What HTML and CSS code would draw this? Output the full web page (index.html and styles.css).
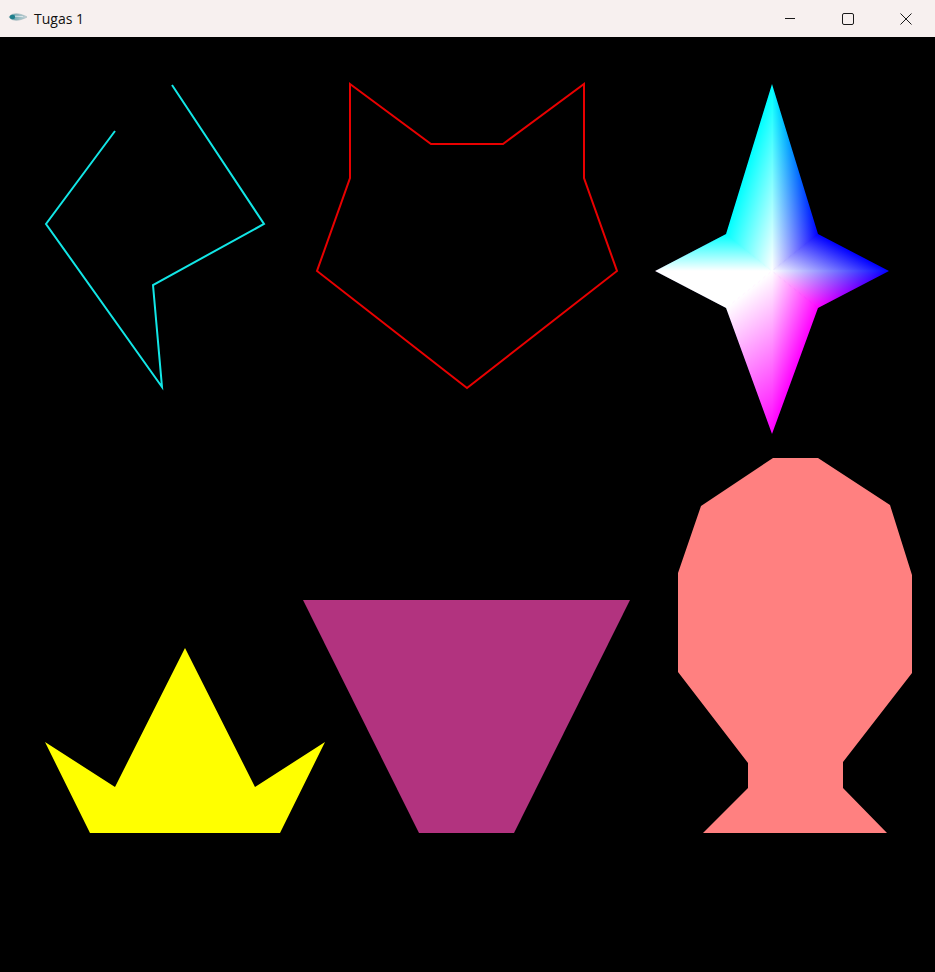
FILE: index.html
```html
<!DOCTYPE html>
<html lang="id">
<head>
<meta charset="utf-8">
<title>Tugas 1</title>
<link rel="stylesheet" href="styles.css">
</head>
<body>
<div class="window">
  <header class="titlebar">
    <svg class="app-icon" width="20" height="10" viewBox="0 0 20 10">
      <defs>
        <linearGradient id="fishBody" x1="0" y1="0" x2="1" y2="0">
          <stop offset="0" stop-color="#2a8c98"/>
          <stop offset="0.35" stop-color="#7fb0b8"/>
          <stop offset="1" stop-color="#c9d6da"/>
        </linearGradient>
      </defs>
      <path d="M1 5 C3 1.5 9 1 13 2.5 C15.5 3.3 18 4.2 19 5 C18 5.8 15.5 6.7 13 7.5 C9 9 3 8.5 1 5 Z" fill="url(#fishBody)" stroke="#9fb3b9" stroke-width="0.6"/>
      <ellipse cx="4.5" cy="5" rx="2.6" ry="2.2" fill="#1f7f8c"/>
      <path d="M7 4.2 L15 4.6" stroke="#e8eef0" stroke-width="0.8"/>
    </svg>
    <span class="title">Tugas 1</span>
    <div class="controls">
      <div class="ctl"><span class="min-line"></span></div>
      <div class="ctl"><span class="max-box"></span></div>
      <div class="ctl">
        <svg width="12" height="12" viewBox="0 0 12 12"><path d="M0.5 0.5 L11.5 11.5 M11.5 0.5 L0.5 11.5" stroke="#1a1a1a" stroke-width="1" fill="none"/></svg>
      </div>
    </div>
  </header>
  <main class="canvas">
    <svg class="scene" width="935" height="935" viewBox="0 37 935 935">
      <defs>
        <clipPath id="starClip">
          <polygon points="772,84 818,234 889,271 818,308 772,434 726,308 655,271 726,234"/>
        </clipPath>
        <!-- red channel -->
        <linearGradient id="gR1" gradientUnits="userSpaceOnUse" x1="824.4" y1="254.9" x2="772" y2="271">
          <stop offset="0" stop-color="#000"/><stop offset="1" stop-color="#f00"/>
        </linearGradient>
        <linearGradient id="gR2" gradientUnits="userSpaceOnUse" x1="797" y1="223.05" x2="772" y2="271">
          <stop offset="0" stop-color="#000"/><stop offset="1" stop-color="#f00"/>
        </linearGradient>
        <linearGradient id="gR3" gradientUnits="userSpaceOnUse" x1="843.04" y1="328.14" x2="889" y2="271">
          <stop offset="0" stop-color="#f00"/><stop offset="1" stop-color="#000"/>
        </linearGradient>
        <linearGradient id="gR7" gradientUnits="userSpaceOnUse" x1="726" y1="271" x2="726" y2="234">
          <stop offset="0" stop-color="#f00"/><stop offset="1" stop-color="#000"/>
        </linearGradient>
        <linearGradient id="gR8" gradientUnits="userSpaceOnUse" x1="719.6" y1="254.9" x2="772" y2="271">
          <stop offset="0" stop-color="#000"/><stop offset="1" stop-color="#f00"/>
        </linearGradient>
        <!-- green channel -->
        <linearGradient id="gG1" gradientUnits="userSpaceOnUse" x1="772" y1="234" x2="818" y2="234">
          <stop offset="0" stop-color="#0f0"/><stop offset="1" stop-color="#000"/>
        </linearGradient>
        <linearGradient id="gG2" gradientUnits="userSpaceOnUse" x1="797" y1="223.05" x2="772" y2="271">
          <stop offset="0" stop-color="#000"/><stop offset="1" stop-color="#0f0"/>
        </linearGradient>
        <linearGradient id="gG3" gradientUnits="userSpaceOnUse" x1="796.99" y1="318.95" x2="772" y2="271">
          <stop offset="0" stop-color="#000"/><stop offset="1" stop-color="#0f0"/>
        </linearGradient>
        <linearGradient id="gG4" gradientUnits="userSpaceOnUse" x1="824.5" y1="290.2" x2="772" y2="271">
          <stop offset="0" stop-color="#000"/><stop offset="1" stop-color="#0f0"/>
        </linearGradient>
        <linearGradient id="gG5" gradientUnits="userSpaceOnUse" x1="692.4" y1="335" x2="772" y2="434">
          <stop offset="0" stop-color="#0f0"/><stop offset="1" stop-color="#000"/>
        </linearGradient>
      </defs>

      <!-- cyan open polyline -->
      <polyline class="cyan-line" points="115,131 46,224 162,387 153,285 264,224 172,85"/>

      <!-- red cat head outline -->
      <polygon class="red-line" points="350,84 431,144 503,144 584,84 584,178 617,271 467,388 317,271 350,178"/>

      <!-- shaded star -->
      <g class="star">
        <polygon fill="#0000ff" points="772,84 818,234 889,271 818,308 772,434 726,308 655,271 726,234"/>
        <g class="screen" clip-path="url(#starClip)">
          <polygon class="tri" fill="url(#gR1)" stroke="url(#gR1)" points="772,271 772,84 818,234"/>
          <polygon class="tri" fill="url(#gR2)" stroke="url(#gR2)" points="772,271 818,234 889,271"/>
          <polygon class="tri" fill="url(#gR3)" stroke="url(#gR3)" points="772,271 889,271 818,308"/>
          <polygon class="tri" fill="#f00" stroke="#f00" points="772,271 818,308 772,434 726,308 655,271"/>
          <polygon class="tri" fill="url(#gR7)" stroke="url(#gR7)" points="772,271 655,271 726,234"/>
          <polygon class="tri" fill="url(#gR8)" stroke="url(#gR8)" points="772,271 726,234 772,84"/>
        </g>
        <g class="screen" clip-path="url(#starClip)">
          <polygon class="tri" fill="url(#gG1)" stroke="url(#gG1)" points="772,271 772,84 818,234"/>
          <polygon class="tri" fill="url(#gG2)" stroke="url(#gG2)" points="772,271 818,234 889,271"/>
          <polygon class="tri" fill="url(#gG3)" stroke="url(#gG3)" points="772,271 889,271 818,308"/>
          <polygon class="tri" fill="url(#gG4)" stroke="url(#gG4)" points="772,271 818,308 772,434"/>
          <polygon class="tri" fill="url(#gG5)" stroke="url(#gG5)" points="772,271 772,434 726,308"/>
          <polygon class="tri" fill="#0f0" stroke="#0f0" points="772,271 726,308 655,271 726,234 772,84"/>
        </g>
      </g>

      <!-- yellow crown -->
      <polygon class="crown" points="185,648 255,787 325,742 280,833 90,833 45,742 115,787"/>

      <!-- purple trapezoid -->
      <polygon class="trapezoid" points="303,600 630,600 514,833 419,833"/>

      <!-- salmon vase -->
      <polygon class="vase" points="773,458 818,458 890,505 912,575 912,673 843,762 843,788 887,833 703,833 748,788 748,763 678,672 678,573 701,506"/>
    </svg>
  </main>
</div>
</body>
</html>
```

FILE: styles.css
```css
html, body {
  margin: 0;
  padding: 0;
  background: #000;
}

.window {
  width: 935px;
  height: 972px;
  display: flex;
  flex-direction: column;
  overflow: hidden;
}

.titlebar {
  height: 37px;
  flex: 0 0 37px;
  display: flex;
  align-items: center;
  background: #f7f0ef;
  font-family: "Segoe UI", "Open Sans", "Noto Sans", sans-serif;
  color: #111;
}

.app-icon {
  margin-left: 8px;
  margin-top: -3px;
  display: block;
}

.title {
  margin-left: 6px;
  font-size: 14px;
  line-height: 37px;
  margin-top: -1px;
}

.controls {
  margin-left: auto;
  display: flex;
  height: 37px;
}

.ctl {
  width: 58px;
  height: 37px;
  display: flex;
  align-items: center;
  justify-content: center;
}

.ctl svg {
  display: block;
}

.min-line {
  display: block;
  width: 10px;
  height: 1px;
  background: #1a1a1a;
}

.max-box {
  display: block;
  width: 10px;
  height: 10px;
  border: 1px solid #1a1a1a;
  border-radius: 2px;
}

.canvas {
  flex: 1 1 auto;
  background: #000;
}

.scene {
  display: block;
}

.cyan-line {
  fill: none;
  stroke: #12e6e6;
  stroke-width: 2;
  stroke-linejoin: miter;
}

.red-line {
  fill: none;
  stroke: #e80000;
  stroke-width: 2;
  stroke-linejoin: miter;
}

.screen {
  mix-blend-mode: screen;
}

.star {
  isolation: isolate;
}

.tri {
  stroke-width: 1;
  stroke-linejoin: round;
}

.crown {
  fill: #ffff00;
}

.trapezoid {
  fill: #b2337f;
}

.vase {
  fill: #ff8080;
}
```
